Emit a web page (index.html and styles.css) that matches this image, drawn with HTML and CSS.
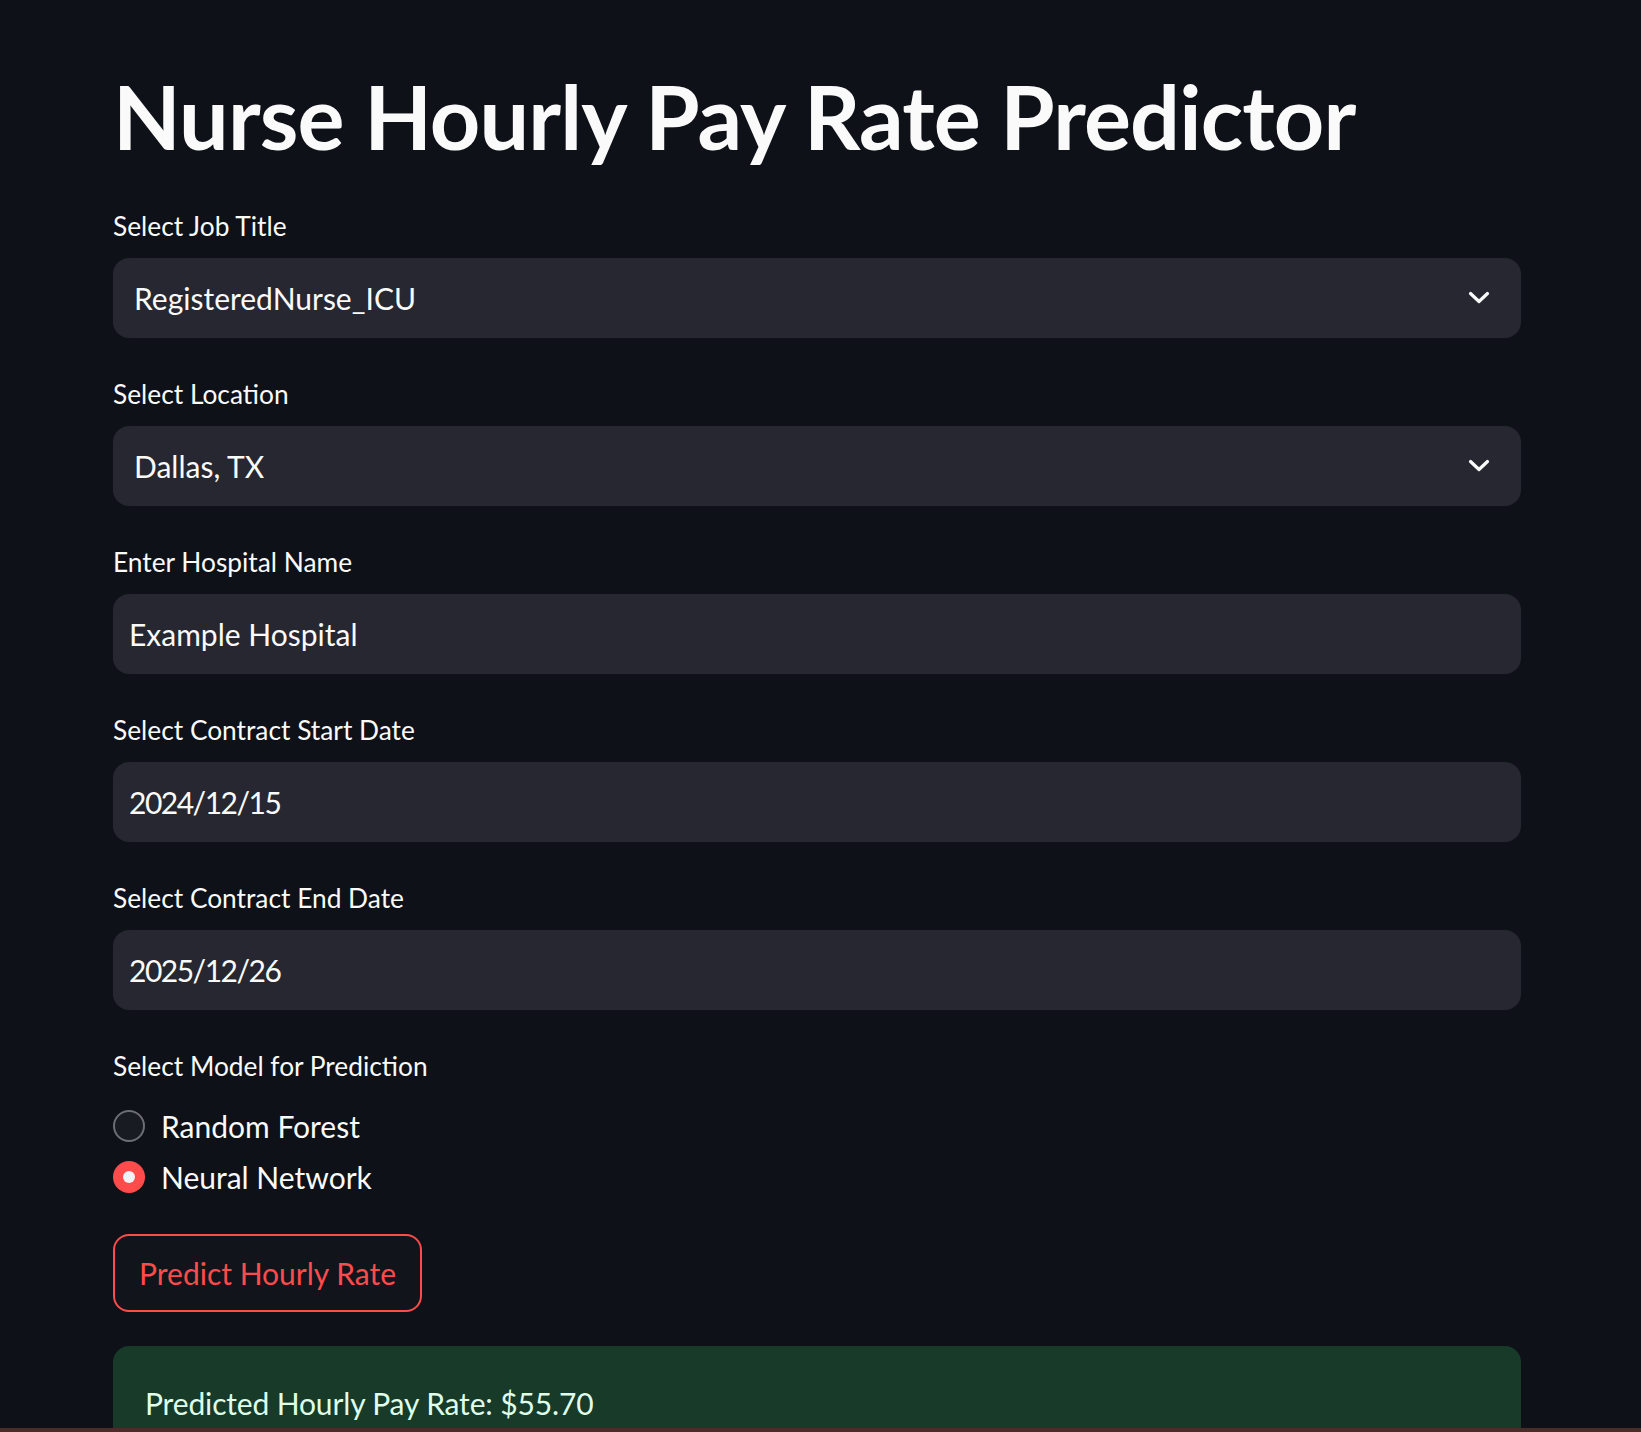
FILE: index.html
```html
<!DOCTYPE html>
<html lang="en">
<head>
<meta charset="utf-8">
<title>Nurse Hourly Pay Rate Predictor</title>
<link rel="stylesheet" href="styles.css">
</head>
<body>
<main class="app">
  <h1 class="title">Nurse Hourly Pay Rate Predictor</h1>

  <div class="field">
    <label class="label">Select Job Title</label>
    <div class="control select">
      <span class="value">RegisteredNurse_ICU</span>
      <svg class="chev" viewBox="0 0 24 24" width="24" height="24"><path d="M3.5 7.5 L12 15.5 L20.5 7.5" fill="none" stroke="#fafafa" stroke-width="3.2" stroke-linecap="round" stroke-linejoin="round"/></svg>
    </div>
  </div>

  <div class="field">
    <label class="label">Select Location</label>
    <div class="control select">
      <span class="value">Dallas, TX</span>
      <svg class="chev" viewBox="0 0 24 24" width="24" height="24"><path d="M3.5 7.5 L12 15.5 L20.5 7.5" fill="none" stroke="#fafafa" stroke-width="3.2" stroke-linecap="round" stroke-linejoin="round"/></svg>
    </div>
  </div>

  <div class="field">
    <label class="label">Enter Hospital Name</label>
    <div class="control input"><span class="value">Example Hospital</span></div>
  </div>

  <div class="field">
    <label class="label">Select Contract Start Date</label>
    <div class="control input"><span class="value date">2024/12/15</span></div>
  </div>

  <div class="field">
    <label class="label">Select Contract End Date</label>
    <div class="control input"><span class="value date">2025/12/26</span></div>
  </div>

  <div class="field radio-field">
    <label class="label">Select Model for Prediction</label>
    <div class="radios">
      <div class="radio"><span class="dot"></span><span class="rtext">Random Forest</span></div>
      <div class="radio checked"><span class="dot"></span><span class="rtext">Neural Network</span></div>
    </div>
  </div>

  <div class="btn-row"><button class="btn">Predict Hourly Rate</button></div>

  <div class="success">Predicted Hourly Pay Rate: $55.70</div>
</main>
<div class="bottom-bar"></div>
</body>
</html>
```

FILE: styles.css
```css
html, body {
  margin: 0;
  padding: 0;
  background: #0e1117;
  color: #fafafa;
  font-family: Lato, "Noto Sans", sans-serif;
  overflow: hidden;
  height: 1432px;
}

.app {
  width: 1408px;
  margin-left: 113px;
  display: flex;
  flex-direction: column;
  gap: 32px;
}

.title {
  margin: 0;
  padding-top: 62px;
  font-size: 88px;
  line-height: 108px;
  font-weight: 700;
  letter-spacing: -0.85px;
  color: #fafafa;
}

.field {
  display: flex;
  flex-direction: column;
}

.label {
  height: 48px;
  line-height: 48px;
  margin-bottom: 8px;
  font-size: 26.3px;
  color: #fafafa;
}

.control {
  height: 80px;
  box-sizing: border-box;
  background: #262730;
  border-radius: 16px;
  display: flex;
  align-items: center;
  font-size: 30px;
  line-height: 80px;
}

.select {
  padding-left: 21px;
  padding-right: 30px;
  justify-content: space-between;
}

.input {
  padding-left: 16px;
}

.date {
  letter-spacing: -1.5px;
}

.chev {
  display: block;
}

.radios {
  margin-top: 2px;
  display: flex;
  flex-direction: column;
}

.radio {
  height: 51px;
  display: flex;
  align-items: center;
  gap: 16px;
  font-size: 30px;
}

.dot {
  width: 32px;
  height: 32px;
  box-sizing: border-box;
  border-radius: 50%;
  border: 2px solid #6c6e75;
  background: #191b22;
  display: flex;
  align-items: center;
  justify-content: center;
  flex: none;
}

.radio.checked .dot {
  border: none;
  background: #ff4b4b;
}

.radio.checked .dot::after {
  content: "";
  width: 12px;
  height: 12px;
  border-radius: 50%;
  background: #f0f2f6;
}

.btn-row {
  display: flex;
}

.btn {
  height: 78px;
  padding: 0 24px;
  border: 2px solid #ff4b4b;
  border-radius: 16px;
  background: #11141b;
  color: #ff4b4b;
  font-family: inherit;
  font-size: 30px;
  line-height: 74px;
}

.success {
  margin-top: 2px;
  background: #173a29;
  color: #dffde9;
  border-radius: 16px;
  padding: 32px;
  font-size: 30px;
  line-height: 51px;
  letter-spacing: -0.15px;
  height: 200px;
}

.bottom-bar {
  position: fixed;
  left: 0;
  right: 0;
  bottom: 0;
  height: 4px;
  background: #4a2c28;
}
```
